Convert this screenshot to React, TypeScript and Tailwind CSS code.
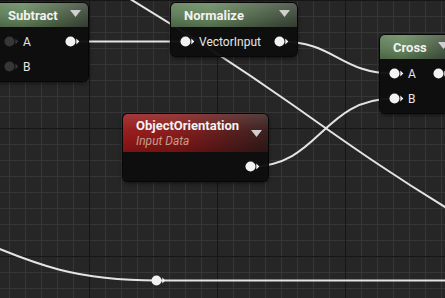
import { ReactNode } from "react";

type Tone = "green" | "red";

interface Row {
  input?: string;
  inputConnected?: boolean;
  output?: boolean;
}

interface NodeProps {
  title: string;
  subtitle?: string;
  tone: Tone;
  rows: Row[];
  className: string;
}

const Pin = ({ connected = true }: { connected?: boolean }) => {
  const fill = connected ? "#f2f2f2" : "#363636";
  return (
    <svg width="15" height="11" viewBox="0 0 15 11" className="shrink-0">
      <circle cx="5.5" cy="5.5" r="5" fill={fill} />
      <polygon points="11.3,2.6 14.3,5.5 11.3,8.4" fill={fill} />
    </svg>
  );
};

const Caret = () => (
  <svg width="11" height="7" viewBox="0 0 11 7" className="shrink-0">
    <polygon points="0,0 11,0 5.5,7" fill="#cfcfcf" />
  </svg>
);

const Header = ({ title, subtitle, tone }: { title: string; subtitle?: string; tone: Tone }) => {
  if (tone === "red") {
    return (
      <div className="relative flex h-[38px] items-center justify-between bg-[linear-gradient(90deg,#951414_0%,#861515_35%,#511717_75%,#331818_100%)] pl-[13px] pr-[6px]">
        <div className="pointer-events-none absolute inset-0 bg-[linear-gradient(180deg,rgba(255,255,255,0.16)_0%,rgba(255,255,255,0.04)_45%,rgba(0,0,0,0.15)_100%)]" />
        <div className="relative flex flex-col pt-[1px]">
          <span className="text-[13px] font-bold leading-[15px] text-[#f2f2f2]">{title}</span>
          <span className="text-[12px] italic leading-[17px] text-[#c39e8c]">{subtitle}</span>
        </div>
        <div className="relative">
          <Caret />
        </div>
      </div>
    );
  }
  return (
    <div className="relative flex h-[24px] items-center justify-between bg-[linear-gradient(90deg,#5c7b55_0%,#66875e_30%,#4f6449_70%,#3e4a3c_100%)] pl-[13px] pr-[7px]">
      <div className="pointer-events-none absolute inset-0 bg-[linear-gradient(180deg,rgba(255,255,255,0.14)_0%,rgba(255,255,255,0.03)_50%,rgba(0,0,0,0.2)_100%)]" />
      <span className="relative text-[13px] font-bold leading-[15px] text-[#f2f2f2]">{title}</span>
      <div className="relative mb-[3px]">
        <Caret />
      </div>
    </div>
  );
};

const GraphNode = ({ title, subtitle, tone, rows, className }: NodeProps) => (
  <div
    className={`absolute overflow-hidden rounded-[5px] bg-[rgba(14,14,14,0.96)] shadow-[0_0_0_1px_#070707,0_2px_4px_rgba(0,0,0,0.6)] ${className}`}
  >
    <Header title={title} subtitle={subtitle} tone={tone} />
    <div className="flex flex-col py-[2px]">
      {rows.map((row, i) => (
        <div key={i} className="flex h-[25px] items-center justify-between">
          {row.input ? (
            <div className="flex items-center gap-[4px] pl-[9px]">
              <Pin connected={row.inputConnected} />
              <span className="text-[12px] leading-[14px] text-[#e6e6e6]">{row.input}</span>
            </div>
          ) : (
            <div />
          )}
          {row.output ? (
            <div className="pr-[8px]">
              <Pin />
            </div>
          ) : null}
        </div>
      ))}
    </div>
  </div>
);

const Wires = ({ children }: { children: ReactNode }) => (
  <svg className="absolute inset-0" width="445" height="298" viewBox="0 0 445 298">
    <g fill="none" stroke="#e4e4e4" strokeWidth="2" strokeLinecap="round">
      {children}
    </g>
  </svg>
);

export default function App() {
  return (
    <div className="relative h-[298px] w-[445px] overflow-hidden bg-[#262626] font-[Roboto,sans-serif] [background-image:linear-gradient(to_right,#161616_1px,transparent_1px),linear-gradient(to_bottom,#161616_1px,transparent_1px),linear-gradient(to_right,#363636_1px,transparent_1px),linear-gradient(to_bottom,#363636_1px,transparent_1px)] [background-size:128px_128px,128px_128px,16px_16px,16px_16px] [background-position:89px_0px,89px_0px,9px_0px,9px_0px]">
      <Wires>
        <path d="M 95 -22 C 180 28, 250 75, 290 103 S 390 175, 470 222" />
        <path d="M 75 41.5 H 186" />
        <path d="M 280 41.5 C 335 41.5, 340 73.5, 394 73.5" />
        <path d="M 251 166.5 C 320 166.5, 322 98.5, 394 98.5" />
        <path d="M -40 232 C 40 268, 80 280.5, 157 280.5" />
        <path d="M 157 280.5 H 450" />
      </Wires>

      <div className="absolute left-[151px] top-[275px]">
        <Pin />
      </div>

      <GraphNode
        className="left-[-5px] top-[3px] w-[93px]"
        title="Subtract"
        tone="green"
        rows={[
          { input: "A", inputConnected: false, output: true },
          { input: "B", inputConnected: false },
        ]}
      />
      <GraphNode
        className="left-[171px] top-[3px] w-[126px]"
        title="Normalize"
        tone="green"
        rows={[{ input: "VectorInput", inputConnected: true, output: true }]}
      />
      <GraphNode
        className="left-[380px] top-[35px] w-[76px]"
        title="Cross"
        tone="green"
        rows={[
          { input: "A", inputConnected: true, output: true },
          { input: "B", inputConnected: true },
        ]}
      />
      <GraphNode
        className="left-[123px] top-[114px] w-[145px]"
        title="ObjectOrientation"
        subtitle="Input Data"
        tone="red"
        rows={[{ output: true }]}
      />
    </div>
  );
}
